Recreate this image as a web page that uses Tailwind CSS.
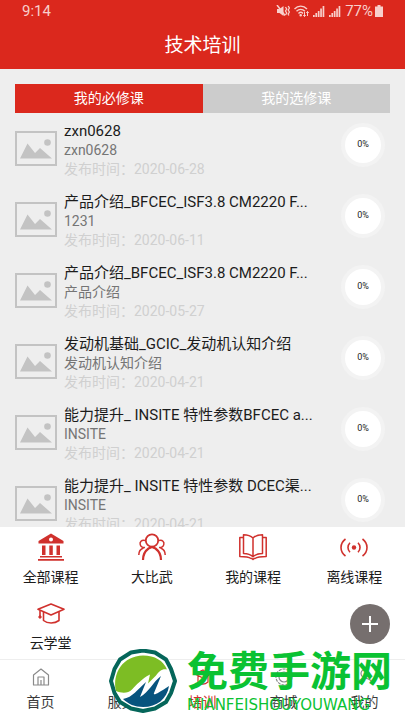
<!DOCTYPE html>
<html lang="zh-CN">
<head>
  <meta charset="UTF-8" />
  <meta name="viewport" content="width=device-width, initial-scale=1.0" />
  <title>技术培训</title>
  <script src="https://cdn.jsdelivr.net/npm/@tailwindcss/browser@4"></script>
</head>
<body class="h-screen flex flex-col overflow-hidden bg-[#eeeeee] text-[#1c1c1c] font-[Roboto,'Noto_Sans_CJK_SC',sans-serif]">
  <!-- shared icon for course thumbnails -->
  <svg class="hidden">
    <symbol id="thumb" viewBox="0 0 42 35">
      <rect x="1" y="1" width="40" height="33" fill="none" stroke="#c3c3c3" stroke-width="2" />
      <circle cx="32.500" cy="11.500" r="3.300" fill="#c3c3c3" />
      <path d="M5 27.500 L12.500 12.500 L20 22 L25 17 L37 27.500 Z" fill="#c3c3c3" />
    </symbol>
  </svg>

  <header class="shrink-0 bg-[#db281d] text-white pb-2.5">
    <div class="flex items-center justify-between h-[22px] pl-[22px] pr-[22px] text-[#f8cfcb]">
      <span class="text-[15px] leading-5">9:14</span>
      <div class="flex items-center gap-1">
        <svg class="w-[14px] h-3" viewBox="0 0 14 12" fill="currentColor">
          <path d="M1 4h2.500L7.500 1v10L3.500 8H1z" />
          <path d="M1 0l8 10.500" stroke="currentColor" stroke-width="1.500" />
          <path d="M9.500 2l1.200 2-1.200 2 1.200 2-1.200 2M12.200 1l1.200 2-1.200 2 1.200 2-1.200 2 .6 1.500" fill="none" stroke="currentColor" stroke-width="1.300" />
        </svg>
        <svg class="w-[15px] h-3" viewBox="0 0 15 12" fill="none" stroke="currentColor" stroke-width="1.400">
          <path d="M.5 4C4 .2 9.500 .2 13 4M2.500 6.200c2.400-2.500 6-2.500 8.400 0M4.500 8.400c1.300-1.300 3.200-1.300 4.500 0" />
          <circle cx="6.700" cy="10.300" r=".6" fill="currentColor" />
          <path d="M10.500 7v4.500M9.300 10l1.200 1.500 1.200-1.500M13.500 11V6.500M12.300 8l1.200-1.500L14.700 8" stroke-width="1" />
        </svg>
        <svg class="w-3 h-3" viewBox="0 0 12 12" fill="currentColor">
          <path d="M0 10h1.700v2H0zM2.400 8h1.700v4H2.400zM4.800 6h1.700v6H4.800zM7.200 3.500h1.700V12H7.200zM9.600 1h1.700v11H9.600z" />
        </svg>
        <svg class="w-3 h-3" viewBox="0 0 12 12" fill="currentColor">
          <path d="M0 10h1.700v2H0zM2.400 8h1.700v4H2.400zM4.800 6h1.700v6H4.800zM7.200 3.500h1.700V12H7.200zM9.600 1h1.700v11H9.600z" />
        </svg>
        <span class="text-[15px] leading-5">77%</span>
        <svg class="w-2 h-3 -ml-0.5" viewBox="0 0 8 12" fill="currentColor">
          <path d="M2.500 0h3v1.500H8V12H0V1.500h2.500z" />
        </svg>
      </div>
    </div>
    <h1 class="mt-2.5 text-center text-[19px] leading-[27px]">技术培训</h1>
  </header>

  <main class="flex-1 min-h-0 overflow-hidden px-[15px] pt-[15px]">
    <div class="flex h-[29px] text-[14px] text-white">
      <button class="flex-1 bg-[#db281d]">我的必修课</button>
      <button class="flex-1 bg-[#cccccc]">我的选修课</button>
    </div>

    <ul class="pt-2">
      <li class="flex items-start h-[71px]">
        <svg class="w-[42px] h-[35px] mt-[10px] shrink-0"><use href="#thumb" /></svg>
        <div class="flex-1 min-w-0 ml-[7px] whitespace-nowrap">
          <h2 class="text-[15px] leading-5">zxn0628</h2>
          <p class="text-[14px] leading-[18px] text-[#757575]">zxn0628</p>
          <p class="text-[14px] leading-5 text-[#d0d0d0]">发布时间：2020-06-28</p>
        </div>
        <div class="shrink-0 size-11 mr-[5px] mt-0.5 rounded-full border-4 border-[#f3f3f3] bg-white flex items-center justify-center text-[9px]">0%</div>
      </li>
      <li class="flex items-start h-[71px]">
        <svg class="w-[42px] h-[35px] mt-[10px] shrink-0"><use href="#thumb" /></svg>
        <div class="flex-1 min-w-0 ml-[7px] whitespace-nowrap">
          <h2 class="text-[15px] leading-5">产品介绍_BFCEC_ISF3.8 CM2220 F...</h2>
          <p class="text-[14px] leading-[18px] text-[#757575]">1231</p>
          <p class="text-[14px] leading-5 text-[#d0d0d0]">发布时间：2020-06-11</p>
        </div>
        <div class="shrink-0 size-11 mr-[5px] mt-0.5 rounded-full border-4 border-[#f3f3f3] bg-white flex items-center justify-center text-[9px]">0%</div>
      </li>
      <li class="flex items-start h-[71px]">
        <svg class="w-[42px] h-[35px] mt-[10px] shrink-0"><use href="#thumb" /></svg>
        <div class="flex-1 min-w-0 ml-[7px] whitespace-nowrap">
          <h2 class="text-[15px] leading-5">产品介绍_BFCEC_ISF3.8 CM2220 F...</h2>
          <p class="text-[14px] leading-[18px] text-[#757575]">产品介绍</p>
          <p class="text-[14px] leading-5 text-[#d0d0d0]">发布时间：2020-05-27</p>
        </div>
        <div class="shrink-0 size-11 mr-[5px] mt-0.5 rounded-full border-4 border-[#f3f3f3] bg-white flex items-center justify-center text-[9px]">0%</div>
      </li>
      <li class="flex items-start h-[71px]">
        <svg class="w-[42px] h-[35px] mt-[10px] shrink-0"><use href="#thumb" /></svg>
        <div class="flex-1 min-w-0 ml-[7px] whitespace-nowrap">
          <h2 class="text-[15px] leading-5">发动机基础_GCIC_发动机认知介绍</h2>
          <p class="text-[14px] leading-[18px] text-[#757575]">发动机认知介绍</p>
          <p class="text-[14px] leading-5 text-[#d0d0d0]">发布时间：2020-04-21</p>
        </div>
        <div class="shrink-0 size-11 mr-[5px] mt-0.5 rounded-full border-4 border-[#f3f3f3] bg-white flex items-center justify-center text-[9px]">0%</div>
      </li>
      <li class="flex items-start h-[71px]">
        <svg class="w-[42px] h-[35px] mt-[10px] shrink-0"><use href="#thumb" /></svg>
        <div class="flex-1 min-w-0 ml-[7px] whitespace-nowrap">
          <h2 class="text-[15px] leading-5">能力提升_ INSITE 特性参数BFCEC a...</h2>
          <p class="text-[14px] leading-[18px] text-[#757575]">INSITE</p>
          <p class="text-[14px] leading-5 text-[#d0d0d0]">发布时间：2020-04-21</p>
        </div>
        <div class="shrink-0 size-11 mr-[5px] mt-0.5 rounded-full border-4 border-[#f3f3f3] bg-white flex items-center justify-center text-[9px]">0%</div>
      </li>
      <li class="flex items-start h-[71px]">
        <svg class="w-[42px] h-[35px] mt-[10px] shrink-0"><use href="#thumb" /></svg>
        <div class="flex-1 min-w-0 ml-[7px] whitespace-nowrap">
          <h2 class="text-[15px] leading-5">能力提升_ INSITE 特性参数 DCEC渠...</h2>
          <p class="text-[14px] leading-[18px] text-[#757575]">INSITE</p>
          <p class="text-[14px] leading-5 text-[#d0d0d0]">发布时间：2020-04-21</p>
        </div>
        <div class="shrink-0 size-11 mr-[5px] mt-0.5 rounded-full border-4 border-[#f3f3f3] bg-white flex items-center justify-center text-[9px]">0%</div>
      </li>
    </ul>
  </main>

  <section class="relative shrink-0 bg-white">
    <div class="grid grid-cols-4 pt-1.5 text-[14px] leading-5 text-[#d0312d]">
      <a href="#" class="flex flex-col items-center h-[66px]">
        <svg class="size-7" viewBox="0 0 28 28" fill="currentColor">
          <path fill-rule="evenodd" d="M14 .5L26.500 8v2.500h-25V8zM14 4.500a2 2 0 100 4 2 2 0 000-4z" />
          <path d="M5 12.500h3.500V22H5zM12.300 12.500h3.500V22h-3.500zM19.500 12.500H23V22h-3.500zM3 23h22v1.500H3zM1 26h26v1.700H1z" />
        </svg>
        <span class="mt-1.5 text-[#1c1c1c]">全部课程</span>
      </a>
      <a href="#" class="flex flex-col items-center h-[66px]">
        <svg class="size-7" viewBox="0 0 28 28" fill="none" stroke="currentColor" stroke-width="1.800">
          <circle cx="14" cy="7.500" r="6.200" />
          <path d="M5 27C5 23 6.500 18.500 10.500 15.500L14 14l3.500 1.500C21.500 18.500 23 23 23 27" stroke-width="2.200" />
          <path d="M7 7.500C3.500 6.500 1.500 9 2.200 11.500 2.500 13.500 4.500 15 7 14.500M21 7.500c3.500-1 5.500 1.500 4.800 4-.3 2-2.300 3.500-4.800 3M5.500 15C2.500 16 .8 18.500.8 22M22.500 15c3 1 4.700 3.500 4.700 7" stroke-width="1.500" />
        </svg>
        <span class="mt-1.5 text-[#1c1c1c]">大比武</span>
      </a>
      <a href="#" class="flex flex-col items-center h-[66px]">
        <svg class="size-7" viewBox="0 0 28 28" fill="none" stroke="currentColor" stroke-width="1.500" stroke-linejoin="round">
          <path d="M14 5C11.500 2.500 8.500 1.700 4.500 1.700V20.500c4 0 7 .8 9.500 3.300 2.500-2.500 5.500-3.300 9.500-3.300V1.700C19.500 1.700 16.500 2.500 14 5zM14 5v18.500" />
          <path d="M4.500 4.500H.8V23.500c5 0 8.500 0 11.200 2h1l1 1 1-1h1c2.700-2 6.200-2 11.200-2V4.500h-3.700" />
        </svg>
        <span class="mt-1.5 text-[#1c1c1c]">我的课程</span>
      </a>
      <a href="#" class="flex flex-col items-center h-[66px]">
        <svg class="size-7" viewBox="0 0 28 28" fill="none" stroke="currentColor" stroke-width="1.600">
          <circle cx="14" cy="14.500" r="2.200" fill="currentColor" stroke="none" />
          <path d="M10 9.800c-2.700 2.700-2.700 6.700 0 9.400M18 9.800c2.700 2.700 2.700 6.700 0 9.400M5.500 6C-.5 10.500-.5 18.500 5.500 23M22.500 6c6 4.500 6 12.500 0 17" />
        </svg>
        <span class="mt-1.5 text-[#1c1c1c]">离线课程</span>
      </a>
      <a href="#" class="flex flex-col items-center h-[60px]">
        <svg class="size-7" viewBox="0 0 28 28" fill="none" stroke="currentColor" stroke-width="1.600" stroke-linejoin="round">
          <path d="M14 5L27 10.300 14 16 1 10.300z" />
          <path d="M6.500 13v8.500c4 3.300 11 3.300 15.500 0V13M3 11.500V17" />
          <circle cx="3" cy="18" r="1.200" fill="currentColor" stroke-width="1" />
        </svg>
        <span class="mt-1.5 text-[#1c1c1c]">云学堂</span>
      </a>
    </div>
    <button aria-label="添加" class="absolute right-[15px] bottom-[15px] size-10 rounded-full bg-[#766f6e] flex items-center justify-center">
      <svg class="size-4" viewBox="0 0 16 16" stroke="#fff" stroke-width="2"><path d="M8 0v16M0 8h16" /></svg>
    </button>
  </section>

  <nav class="relative shrink-0 grid grid-cols-5 h-[61px] pt-2 bg-white border-t border-[#eeeeee] text-[14px] leading-5 text-[#3a3a3a]">
    <a href="#" class="flex flex-col items-center">
      <svg class="size-[18px]" viewBox="0 0 18 18" fill="none" stroke="#8a8a8a" stroke-width="1.200" stroke-linejoin="round">
        <path d="M1.500 7L9 1l7.500 6v10h-15zM6 17V9h6v8M9 12v5" />
      </svg>
      <span class="mt-1.5">首页</span>
    </a>
    <a href="#" class="flex flex-col items-center">
      <svg class="size-[18px]" viewBox="0 0 18 18" fill="none" stroke="#8a8a8a" stroke-width="1.200"><circle cx="9" cy="9" r="7" /></svg>
      <span class="mt-1.5">服务</span>
    </a>
    <a href="#" class="flex flex-col items-center text-[#d0312d]">
      <svg class="size-[18px]" viewBox="0 0 18 18" fill="none" stroke="currentColor" stroke-width="1.200"><path d="M9 2l8 4-8 4-8-4zM4 8v6c3 2.500 7 2.500 10 0V8" /></svg>
      <span class="mt-1.5">培训</span>
    </a>
    <a href="#" class="flex flex-col items-center">
      <svg class="size-[18px]" viewBox="0 0 18 18" fill="none" stroke="#8a8a8a" stroke-width="1.200"><circle cx="9" cy="9" r="8" stroke-dasharray="3 1" /><circle cx="9" cy="9" r="5" /></svg>
      <span class="mt-1.5">商城</span>
    </a>
    <a href="#" class="flex flex-col items-center">
      <svg class="size-[18px]" viewBox="0 0 18 18" fill="none" stroke="#8a8a8a" stroke-width="1.200"><circle cx="9" cy="5.500" r="4" /><path d="M1.500 17c0-9 15-9 15 0" /></svg>
      <span class="mt-1.5">我的</span>
    </a>

    <!-- site watermark -->
    <div class="absolute right-3 bottom-[7px] flex items-end gap-[10px] pointer-events-none text-[#0ac232]">
      <svg class="w-[68px] h-16" viewBox="0 0 68 64">
        <path d="M22 3.500L34 1.500 46 3.500 57 10.500 62 20 66 32 62 44 57 53 46 59.500 34 62 22 59.500 11 53 5.500 44 2 32 5.500 20 11 10.500z" fill="#fff" stroke="#05665a" stroke-width="4" stroke-linejoin="round" />
        <path d="M7 42C3 24 14 7 34 6.500c12 0 20 5 24 14-5-1-8 2-11 6l-8 8 2-9c-8 4-13 10-18 15-4 4-10 4-16 1.500z" fill="#7dbd24" />
        <path d="M14 50c10-2 14-9 23-17l-6 15c9-5 13-15 21-21l-7 17c-1 3 3 1 15-7C58 50 48 58 34 58c-8 0-15-3-20-8z" fill="#07547e" />
      </svg>
      <div class="w-[206px] flex flex-col">
        <span class="text-[41px] leading-[41px] font-bold whitespace-nowrap">免费手游网</span>
        <span class="mt-1 text-[15px] leading-4 whitespace-nowrap font-['DejaVu_Sans',sans-serif]">MIANFEISHOUYOUWANG</span>
      </div>
    </div>
  </nav>
</body>
</html>
